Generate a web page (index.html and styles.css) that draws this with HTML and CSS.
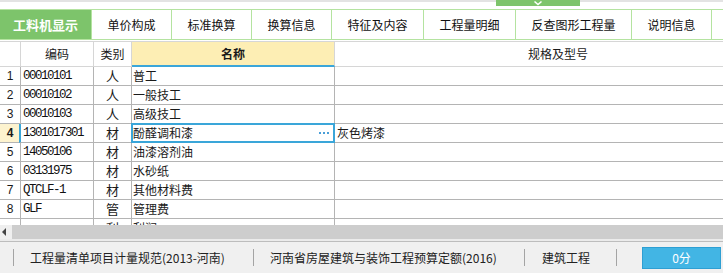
FILE: index.html
```html
<!DOCTYPE html>
<html lang="zh-CN">
<head>
<meta charset="utf-8">
<title>工料机显示</title>
<link rel="stylesheet" href="styles.css">
</head>
<body>
<div class="app">
  <div class="topstrip">
    <div class="handle">
      <svg width="10" height="6" viewBox="0 0 10 6"><path d="M1.5 1.5 L5 4.5 L8.5 1.5" fill="none" stroke="#ffffff" stroke-width="1.6"/></svg>
    </div>
  </div>
  <div class="tabs">
    <div class="tab active w91">工料机显示</div>
    <div class="tab w80">单价构成</div>
    <div class="tab w80">标准换算</div>
    <div class="tab w80">换算信息</div>
    <div class="tab w92">特征及内容</div>
    <div class="tab w92">工程量明细</div>
    <div class="tab w116">反查图形工程量</div>
    <div class="tab w80">说明信息</div>
    <div class="tab rest"></div>
  </div>
  <div class="tabgap"></div>
  <div class="gridwrap">
    <div class="grid">
      <div class="row head">
        <div class="c c0"></div>
        <div class="c c1 center">编码</div>
        <div class="c c2 center">类别</div>
        <div class="c c3 center name-head">名称</div>
        <div class="c c4 center">规格及型号</div>
      </div>
      <div class="row">
        <div class="c c0 num">1</div>
        <div class="c c1 code">00010101</div>
        <div class="c c2 cat">人</div>
        <div class="c c3">普工</div>
        <div class="c c4"></div>
      </div>
      <div class="row">
        <div class="c c0 num">2</div>
        <div class="c c1 code">00010102</div>
        <div class="c c2 cat">人</div>
        <div class="c c3">一般技工</div>
        <div class="c c4"></div>
      </div>
      <div class="row">
        <div class="c c0 num">3</div>
        <div class="c c1 code">00010103</div>
        <div class="c c2 cat">人</div>
        <div class="c c3">高级技工</div>
        <div class="c c4"></div>
      </div>
      <div class="row current">
        <div class="c c0 num cur-num">4</div>
        <div class="c c1 code cur-code">1301017301</div>
        <div class="c c2 cat">材</div>
        <div class="c c3 editing">酚醛调和漆<span class="dots"><i></i><i></i><i></i></span></div>
        <div class="c c4">灰色烤漆</div>
      </div>
      <div class="row">
        <div class="c c0 num">5</div>
        <div class="c c1 code">14050106</div>
        <div class="c c2 cat">材</div>
        <div class="c c3">油漆溶剂油</div>
        <div class="c c4"></div>
      </div>
      <div class="row">
        <div class="c c0 num">6</div>
        <div class="c c1 code">03131975</div>
        <div class="c c2 cat">材</div>
        <div class="c c3">水砂纸</div>
        <div class="c c4"></div>
      </div>
      <div class="row">
        <div class="c c0 num">7</div>
        <div class="c c1 code">QTCLF-1</div>
        <div class="c c2 cat">材</div>
        <div class="c c3">其他材料费</div>
        <div class="c c4"></div>
      </div>
      <div class="row">
        <div class="c c0 num">8</div>
        <div class="c c1 code">GLF</div>
        <div class="c c2 cat">管</div>
        <div class="c c3">管理费</div>
        <div class="c c4"></div>
      </div>
      <div class="row">
        <div class="c c0 num"></div>
        <div class="c c1 code"></div>
        <div class="c c2 cat">利</div>
        <div class="c c3">利润</div>
        <div class="c c4"></div>
      </div>
    </div>
  </div>
  <div class="hscroll">
    <div class="arrow"><svg width="5" height="8" viewBox="0 0 5 8"><path d="M4 0 L0 4 L4 8 Z" fill="#444"/></svg></div>
    <div class="track"></div>
  </div>
  <div class="scrollgap"></div>
  <div class="status">
    <div class="sep"></div>
    <div class="item i1">工程量清单项目计量规范(2013-河南)</div>
    <div class="sep"></div>
    <div class="item i2">河南省房屋建筑与装饰工程预算定额(2016)</div>
    <div class="sep"></div>
    <div class="item i3">建筑工程</div>
    <div class="sep"></div>
    <div class="score">0分</div>
  </div>
</div>
</body>
</html>
```
FILE: styles.css
```css
* { box-sizing: border-box; }
html, body { margin: 0; padding: 0; }
body {
  width: 723px;
  height: 273px;
  overflow: hidden;
  background: #ffffff;
  font-family: "Noto Sans CJK SC", "Microsoft YaHei", sans-serif;
  color: #1a1a1a;
}
.app { width: 723px; height: 273px; display: flex; flex-direction: column; overflow: hidden; }

.topstrip {
  position: relative;
  height: 9px;
  border-top: 2px solid #e3e3e3;
  flex: none;
}
.handle {
  position: absolute;
  left: 496px;
  top: -2px;
  width: 84px;
  height: 6px;
  background: #7dc46b;
  display: flex;
  justify-content: center;
  align-items: flex-start;
}
.handle svg { display: block; }

.tabs {
  flex: none;
  display: flex;
  height: 31px;
  border-top: 1px solid #b4e3a0;
  border-bottom: 1px solid #b4e3a0;
}
.tab {
  flex: none;
  height: 29px;
  border-right: 1px solid #b4e3a0;
  display: flex;
  align-items: center;
  justify-content: center;
  font-size: 12px;
  color: #111;
  white-space: nowrap;
}
.tab.active {
  background: #7dc46b;
  color: #ffffff;
  font-weight: bold;
  font-size: 13px;
}
.w91 { width: 92px; }
.w80 { width: 80px; }
.w92 { width: 92px; }
.w116 { width: 116px; }
.tab.rest { flex: 1; border-right: none; }

.tabgap { flex: none; height: 1px; }

.gridwrap {
  flex: none;
  height: 184px;
  border-top: 1px solid #d6d6d6;
  overflow: hidden;
}
.grid { width: 850px; }
.row {
  display: flex;
  height: 19px;
}
.row.head { height: 25px; }
.c {
  flex: none;
  height: 100%;
  border-right: 1px solid #b4b4b4;
  border-bottom: 1px solid #b4b4b4;
  font-size: 12px;
  line-height: 17px;
  padding-left: 1px;
  white-space: nowrap;
  overflow: hidden;
  position: relative;
}
.head .c {
  border-right-color: #d6d6d6;
  border-bottom-color: #d6d6d6;
  line-height: 24px;
}
.c0 { width: 21px; }
.c1 { width: 73px; }
.c2 { width: 38px; }
.c3 { width: 203px; }
.c4 { width: 515px; border-right: none; }
.head .c4 { padding-left: 193px; text-align: left; }
.center { text-align: center; padding-left: 0; }
.name-head {
  background: #fdeeb4;
  font-weight: bold;
  border-bottom: 2px solid #3aa6d9 !important;
}
.num {
  text-align: center;
  padding-left: 0;
  font-family: "Liberation Sans", Arial, sans-serif;
  font-size: 12px;
  line-height: 18px;
}
.cur-num { font-weight: bold; background: #fdf3cf; }
.cur-code { border-left: 2px solid #3aa6d9; margin-left: -2px; width: 75px; padding-left: 1px; }
.code {
  font-family: "Liberation Mono", "Courier New", monospace;
  font-size: 12.5px;
  letter-spacing: -1.5px;
  line-height: 18px;
  padding-left: 2px;
  color: #111;
}
.cat {
  text-align: center;
  padding-left: 0;
  font-size: 13px;
}
.editing { overflow: visible; }
.editing::after {
  content: "";
  position: absolute;
  left: -1px;
  top: -1px;
  right: -1px;
  bottom: -1px;
  border: 2px solid #3aa6d9;
  pointer-events: none;
}
.row.current .c3 { z-index: 1; }
.dots {
  position: absolute;
  right: 5px;
  top: 8px;
  display: flex;
  gap: 2px;
}
.dots i {
  display: block;
  width: 2px;
  height: 2px;
  background: #4a9fd8;
}
.row.current .c4 { padding-left: 2px; }

.hscroll {
  flex: none;
  height: 14px;
  display: flex;
}
.hscroll .arrow {
  width: 12px;
  height: 14px;
  background: #efefef;
  display: flex;
  align-items: center;
  justify-content: center;
  padding-right: 3px;
}
.hscroll .track { flex: 1; background: #cdcdcd; }
.scrollgap { flex: none; height: 2px; background: #ebebeb; border-bottom: 0; }

.status {
  flex: 1;
  background: #f0f0f0;
  border-top: 1px solid #bdbdbd;
  display: flex;
  align-items: center;
  padding-left: 13px;
  font-size: 12px;
  color: #222;
}
.sep { width: 1px; height: 17px; background: #a4a4a4; flex: none; }
.item { flex: none; white-space: nowrap; padding-left: 16px; }
.i1 { width: 239px; }
.i2 { width: 270px; }
.i3 { width: 91px; padding-left: 17px; }
.score {
  margin-left: 25px;
  width: 79px;
  height: 22px;
  background: #42b5e4;
  border: 1px solid #2e9fd3;
  color: #ffffff;
  display: flex;
  align-items: center;
  justify-content: center;
  font-size: 12px;
}
```
